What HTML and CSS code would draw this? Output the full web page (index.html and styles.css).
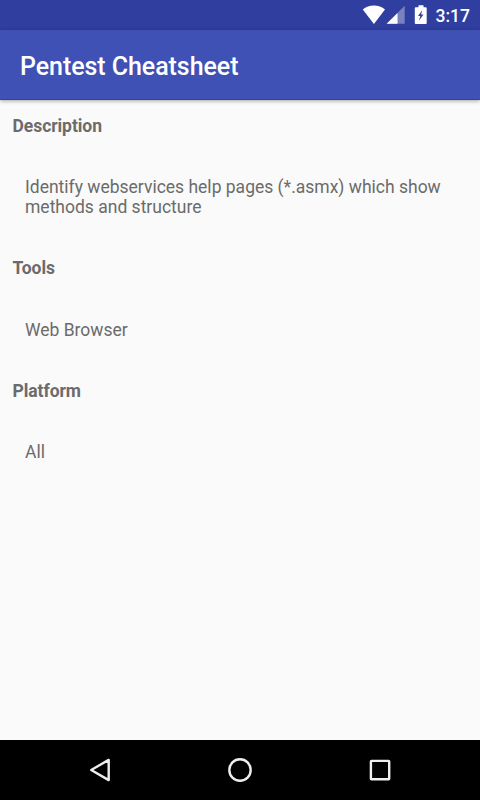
FILE: index.html
```html
<!DOCTYPE html>
<html lang="en">
<head>
<meta charset="utf-8">
<title>Pentest Cheatsheet</title>
<link rel="stylesheet" href="styles.css">
</head>
<body>
<div class="screen">
  <div class="status-bar">
    <svg class="status-icons" width="68" height="30" viewBox="0 0 68 30" fill="#fff">
      <path d="M2.8 9.6C8.5 4.2 19.3 4.2 25 9.6L13.9 24z"/>
      <path d="M44.7 5.7V23.7H26.7z" opacity=".35"/>
      <path d="M37.5 12.9V23.7H26.7z"/>
      <path fill-rule="evenodd" d="M58.500 5.200h5v2h2.200q1 0 1 1v14.800q0 1-1 1h-9.900q-1 0-1-1V8.200q0-1 1-1h2.700zM62.200 10.200l-4.200 5.800h2.300l-1.300 4.800 4.500-6.200h-2.400z"/>
    </svg>
    <span class="clock">3:17</span>
  </div>
  <header class="app-bar"><h1>Pentest Cheatsheet</h1></header>
  <main class="content">
    <h2 class="first">Description</h2>
    <p>Identify webservices help pages (*.asmx) which show methods and structure</p>
    <h2>Tools</h2>
    <p>Web Browser</p>
    <h2>Platform</h2>
    <p>All</p>
  </main>
  <nav class="nav-bar">
    <svg width="30" height="30" viewBox="0 0 30 30"><path d="M6.200 15L23.700 4.900V25.100z"/></svg>
    <svg width="30" height="30" viewBox="0 0 30 30"><circle cx="15" cy="15" r="10.700"/></svg>
    <svg width="30" height="30" viewBox="0 0 30 30"><rect x="5.900" y="5.900" width="18.300" height="18.300" rx=".5"/></svg>
  </nav>
</div>
</body>
</html>
```
FILE: styles.css
```css
body {
  margin: 0;
  font-family: Roboto, "Liberation Sans", sans-serif;
}
.screen {
  width: 480px;
  height: 800px;
  display: flex;
  flex-direction: column;
  background: #fafafa;
  overflow: hidden;
}
.status-bar {
  height: 30px;
  flex: none;
  display: flex;
  justify-content: flex-end;
  align-items: center;
  padding-right: 10px;
  gap: 8px;
  background: #303f9f;
  color: #fff;
}
.clock {
  font-size: 17.5px;
  font-weight: 500;
  line-height: 28px;
  padding-top: 2px;
}
.app-bar {
  height: 70px;
  flex: none;
  box-sizing: border-box;
  padding: 4px 20px 0;
  display: flex;
  align-items: center;
  background: #3f51b5;
  color: #fff;
  border-bottom: 1px solid #2b45ad;
  box-shadow: 0 1px 4px rgba(0, 0, 0, .35);
}
h1 {
  margin: 0;
  font-size: 25px;
  font-weight: 500;
  letter-spacing: -.06px;
}
.content {
  flex: 1;
  padding: 16px 12.5px 0;
  color: #6b6b6b;
  font-size: 17.5px;
  line-height: 20.5px;
}
h2 {
  margin: 0 0 41px;
  font-size: inherit;
  font-weight: 700;
  letter-spacing: -.06px;
}
h2.first {
  margin-bottom: 40px;
}
p {
  margin: 0 12.5px 40.5px;
}
.nav-bar {
  height: 60px;
  flex: none;
  display: flex;
  justify-content: center;
  align-items: center;
  gap: 110px;
  background: #000;
}
.nav-bar svg {
  fill: none;
  stroke: #eee;
  stroke-width: 2.4;
  stroke-linejoin: round;
}
```
